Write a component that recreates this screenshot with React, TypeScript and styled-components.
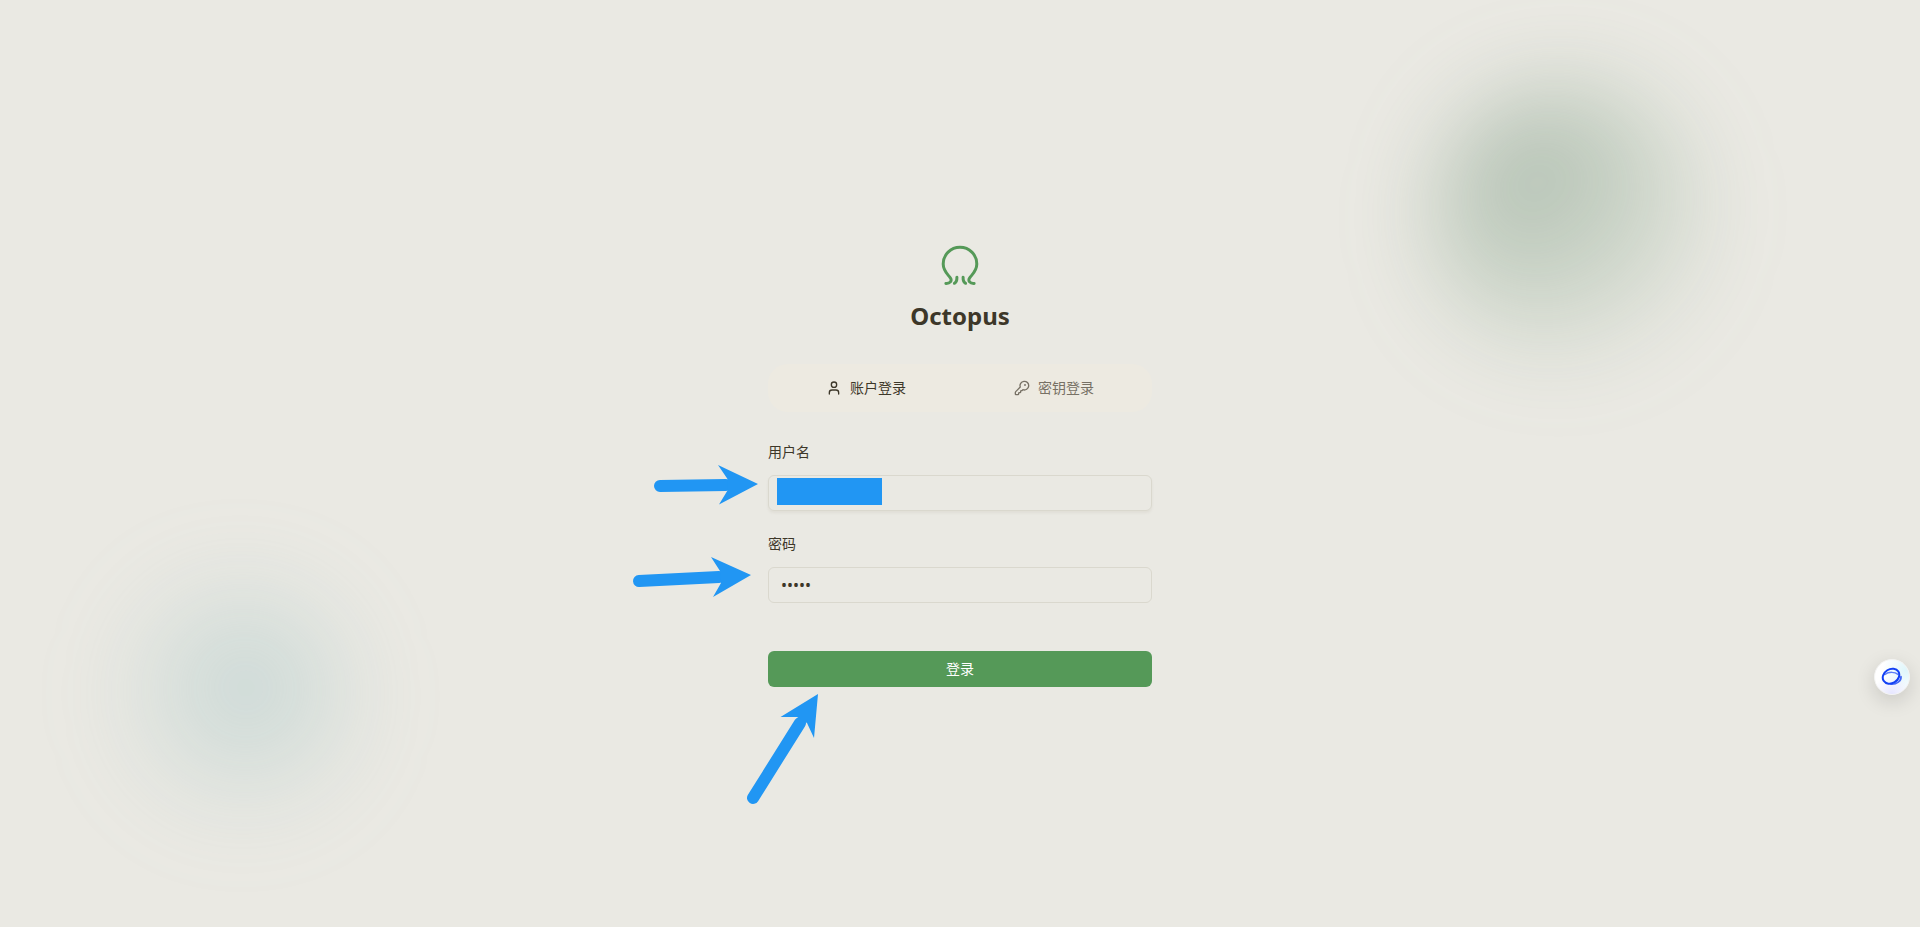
import React, { useState } from "react";
import styled, { createGlobalStyle } from "styled-components";
import { KeyRound, User } from "lucide-react";

const GlobalStyle = createGlobalStyle`
  *, *::before, *::after { box-sizing: border-box; }
  body {
    margin: 0;
    background: #eae9e3;
    color: #3d3729;
    font-family: "Noto Sans", "Noto Sans CJK SC", sans-serif;
    font-size: 14px;
    line-height: 20px;
  }
  button, input { font: inherit; color: inherit; }
`;

const Page = styled.main`
  position: relative;
  display: flex;
  align-items: center;
  justify-content: center;
  min-height: 100vh;
  overflow: hidden;
`;

const Glow = styled.div<{ $tone: "green" | "teal" }>`
  position: absolute;
  border-radius: 50%;
  filter: blur(44px);
  pointer-events: none;
  ${({ $tone }) =>
    $tone === "green"
      ? `
    top: 84px;
    right: 214px;
    width: 276px;
    height: 276px;
    background: radial-gradient(circle at 34% 30%, rgba(98, 132, 108, 0.42), rgba(98, 142, 108, 0.24) 42%, rgba(98, 148, 108, 0) 86%);
  `
      : `
    left: 115px;
    bottom: 104px;
    width: 244px;
    height: 244px;
    background: radial-gradient(circle at 54% 44%, rgba(130, 180, 185, 0.34), rgba(130, 185, 180, 0) 78%);
  `}
`;

const Panel = styled.div`
  position: relative;
  width: 100%;
  max-width: 384px;
`;

const Brand = styled.header`
  display: flex;
  flex-direction: column;
  align-items: center;
  gap: 12px;
  margin-bottom: 32px;
`;

const Title = styled.h1`
  margin: 0;
  font-size: 24px;
  line-height: 32px;
  font-weight: 700;
`;

const Tabs = styled.div`
  display: flex;
  height: 48px;
  padding: 4px;
  margin-bottom: 31px;
  border-radius: 20px;
  background: #edeae1;
`;

const Tab = styled.button<{ $active: boolean }>`
  flex: 1;
  display: flex;
  align-items: center;
  justify-content: center;
  gap: 8px;
  padding: 0;
  border: 0;
  background: none;
  color: ${({ $active }) => ($active ? "#3d3729" : "#777165")};
  cursor: pointer;
`;

const Form = styled.form`
  display: flex;
  flex-direction: column;
  gap: 24px;
`;

const Field = styled.div`
  display: flex;
  flex-direction: column;
  gap: 14px;
`;

const Label = styled.label`
  line-height: 18px;
`;

const InputWrap = styled.div`
  position: relative;
  display: flex;
`;

const Input = styled.input<{ $raised?: boolean }>`
  width: 100%;
  height: 36px;
  padding: 4px 12px;
  border: 1px solid #dad8ce;
  border-radius: 6px;
  background: transparent;
  font-size: 16px;
  outline: none;
  box-shadow: ${({ $raised }) => ($raised ? "0 2px 3px rgba(61, 45, 10, 0.06)" : "none")};
`;

const Redaction = styled.span`
  position: absolute;
  top: 3px;
  left: 9px;
  width: 105px;
  height: 27px;
  background: #2196f3;
`;

const Submit = styled.button`
  height: 36px;
  margin-top: 24px;
  border: 0;
  border-radius: 6px;
  background: #559958;
  color: #fff;
  cursor: pointer;
`;

const Arrows = styled.svg`
  position: absolute;
  top: 0;
  left: -136px;
  pointer-events: none;
`;

const Assistant = styled.button`
  position: absolute;
  right: 10px;
  bottom: 232px;
  display: flex;
  align-items: center;
  justify-content: center;
  width: 36px;
  height: 36px;
  padding: 0;
  border: 1px solid #f4f4f3;
  border-radius: 50%;
  background:
    radial-gradient(circle at 50% 100%, #e6e6ff, rgba(230, 230, 255, 0) 50%),
    radial-gradient(circle at 90% 30%, #dff6fb, rgba(223, 246, 251, 0) 60%),
    #fff;
  box-shadow: 0 6px 20px rgba(0, 0, 0, 0.14);
  cursor: pointer;
`;

const OctopusLogo = () => (
  <svg width="48" height="48" viewBox="0 0 48 48" fill="none" stroke="#559958" strokeWidth="3" strokeLinecap="round" aria-hidden="true">
    <path d="M9.9 43.4C14 43.6 16.4 41 14.3 37.8C12 34.6 7.2 31 7.2 24A16.8 16.8 0 0 1 40.8 24C40.8 31 36 34.6 33.7 37.8C31.6 41 34 43.6 38.1 43.4" />
    <path d="M20.9 37.3C21 40 20.3 42.4 18.4 43.3" />
    <path d="M27.1 37.3C27 40 27.7 42.4 29.6 43.3" />
  </svg>
);

const PointerArrows = () => (
  <Arrows width="200" height="570" viewBox="0 0 200 570" fill="#2196f3" stroke="#2196f3" aria-hidden="true">
    <g strokeWidth="12" strokeLinecap="round">
      <path d="M28 246L94 245" />
      <path d="M7 341L87 337" />
      <path d="M121 558L168 483" />
    </g>
    <g stroke="none">
      <path d="M86 225L126 244L87 264.5L95.5 250.5V239Z" />
      <path d="M79 317L119 335L81 357L89 343L88 331Z" />
      <path d="M148.5 477L186 454L182 498L175 483L165 477Z" />
    </g>
  </Arrows>
);

const RingIcon = () => (
  <svg width="22" height="20" viewBox="0 0 22 20" fill="none" strokeLinecap="round" aria-hidden="true">
    <path d="M3.6 7.6C8 4.4 14 4.8 17 7.4" stroke="#5c7cf8" strokeWidth="1.4" />
    <path d="M20 9.5C20.6 14 15.5 17.6 10 17.2" stroke="#4468f6" strokeWidth="1.7" />
    <path d="M18.4 10.5C18 13 15 15.6 11 16" stroke="#8ba2fa" strokeWidth="1" />
    <ellipse cx="10" cy="9.2" rx="8.7" ry="7" transform="rotate(-32 10 9.2)" stroke="#1240f5" strokeWidth="2" />
  </svg>
);

export default function App() {
  const [mode, setMode] = useState<"account" | "key">("account");

  return (
    <>
      <GlobalStyle />
      <Page>
        <Glow $tone="green" />
        <Glow $tone="teal" />
        <Panel>
          <Brand>
            <OctopusLogo />
            <Title>Octopus</Title>
          </Brand>
          <Tabs role="tablist">
            <Tab type="button" role="tab" aria-selected={mode === "account"} $active={mode === "account"} onClick={() => setMode("account")}>
              <User size={16} />
              账户登录
            </Tab>
            <Tab type="button" role="tab" aria-selected={mode === "key"} $active={mode === "key"} onClick={() => setMode("key")}>
              <KeyRound size={16} />
              密钥登录
            </Tab>
          </Tabs>
          <Form onSubmit={(event) => event.preventDefault()}>
            <Field>
              <Label htmlFor="username">用户名</Label>
              <InputWrap>
                <Input id="username" type="text" autoComplete="username" $raised />
                <Redaction />
              </InputWrap>
            </Field>
            <Field>
              <Label htmlFor="password">密码</Label>
              <Input id="password" type="password" defaultValue="admin" autoComplete="current-password" />
            </Field>
            <Submit type="submit">登录</Submit>
          </Form>
          <PointerArrows />
        </Panel>
        <Assistant type="button" aria-label="助手">
          <RingIcon />
        </Assistant>
      </Page>
    </>
  );
}
